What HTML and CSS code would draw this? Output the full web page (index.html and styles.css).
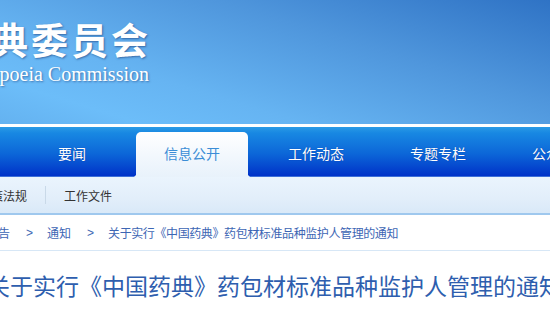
FILE: index.html
```html
<!DOCTYPE html>
<html lang="zh-CN">
<head>
<meta charset="utf-8">
<title>国家药典委员会</title>
<link rel="stylesheet" href="styles.css">
</head>
<body>
<header class="header">
  <div class="logo">
    <div class="logo-cn">国家药典委员会</div>
    <div class="logo-en">Chinese Pharmacopoeia Commission</div>
  </div>
</header>
<nav class="nav">
  <a class="nav-item first">要闻</a>
  <a class="nav-item active">信息公开</a>
  <a class="nav-item">工作动态</a>
  <a class="nav-item">专题专栏</a>
  <a class="nav-item">公众服务</a>
</nav>
<div class="subnav">
  <a class="sub-item first">政策法规</a>
  <span class="sub-sep"></span>
  <a class="sub-item">工作文件</a>
</div>
<div class="crumb">
  <a class="crumb-item first">通知公告</a>
  <span class="crumb-sep">&gt;</span>
  <a class="crumb-item">通知</a>
  <span class="crumb-sep">&gt;</span>
  <a class="crumb-item current">关于实行《中国药典》药包材标准品种监护人管理的通知</a>
</div>
<h1 class="title">关于实行《中国药典》药包材标准品种监护人管理的通知</h1>
</body>
</html>
```

FILE: styles.css
```css
html, body {
  margin: 0;
  padding: 0;
  background: #fff;
  overflow: hidden;
  font-family: "Noto Sans CJK SC", "Noto Sans", sans-serif;
}

.header {
  height: 124px;
  background: linear-gradient(197deg, #2f73c5 0%, #4f96dc 35%, #66b4f2 68%, #6cbdf9 85%, #64b2f0 100%);
  border-bottom: 3px solid #ffffff;
  overflow: hidden;
}

.logo {
  width: 320px;
  margin-left: -170px;
  padding-top: 18px;
  text-align: right;
  color: #ffffff;
}

.logo-cn {
  font-size: 37px;
  font-weight: 700;
  line-height: 42px;
  letter-spacing: 3px;
  margin-right: -1px;
  text-shadow: 1px 1px 2px rgba(20, 50, 110, 0.55);
}

.logo-en {
  font-family: "Liberation Serif", serif;
  font-size: 20px;
  line-height: 22px;
  margin-top: 3px;
  margin-right: 1px;
  text-shadow: 1px 1px 2px rgba(20, 50, 110, 0.5);
}

.nav {
  display: flex;
  height: 50px;
  background: linear-gradient(to bottom, #2b9be6 0%, #1888e2 12%, #0c66d8 55%, #0032c8 100%);
  border-bottom: 1px solid #3d6fd8;
  box-sizing: border-box;
}

.nav-item {
  flex: 0 0 122px;
  height: 49px;
  padding-top: 2px;
  box-sizing: border-box;
  line-height: 48px;
  text-align: center;
  font-size: 14px;
  color: #ffffff;
  text-shadow: 0 0 1px rgba(0, 30, 120, 0.6);
}

.nav-item.first {
  flex-basis: 133px;
  padding-left: 11px;
}

.nav-item.active {
  position: relative;
  flex: 0 0 112px;
  margin: 5px 7px 0 3px;
  height: 45px;
  padding-top: 0;
  line-height: 42px;
  background: linear-gradient(to bottom, #ffffff 0%, #f3f8fd 50%, #e8f2fb 100%);
  border-radius: 5px 5px 0 0;
  color: #3b8dd6;
  text-shadow: none;
}

.nav-item.active::before,
.nav-item.active::after {
  content: "";
  position: absolute;
  bottom: -1px;
  width: 4px;
  height: 5px;
}

.nav-item.active::before {
  left: -4px;
  background: radial-gradient(circle at 0 0, transparent 4px, #e8f2fb 4.6px);
}

.nav-item.active::after {
  right: -4px;
  background: radial-gradient(circle at 100% 0, transparent 4px, #e8f2fb 4.6px);
}

.subnav {
  display: flex;
  align-items: center;
  gap: 18px;
  height: 36px;
  background: linear-gradient(to bottom, #eaf4fd 0%, #e2eefa 60%, #d9e9f8 100%);
  border-bottom: 2px solid #9fc8ee;
}

.sub-item {
  font-size: 12px;
  line-height: 16px;
  color: #333333;
  padding-top: 1px;
}

.sub-item.first {
  margin-left: -21px;
}

.sub-sep {
  width: 1px;
  height: 18px;
  background: #c9d9e8;
}

.crumb {
  display: flex;
  align-items: center;
  height: 35px;
  border-bottom: 1px solid #d7e7f6;
  font-size: 12px;
  color: #3d66b4;
}

.crumb-item.first {
  margin-left: -38px;
}

.crumb-item.current {
  letter-spacing: -0.4px;
}

.crumb-sep {
  margin: 0 14px 0 16px;
  font-family: "Liberation Sans", sans-serif;
}

.title {
  margin: 19px 0 0 -13px;
  font-size: 23px;
  font-weight: 400;
  line-height: 30px;
  color: #2e5eae;
  white-space: nowrap;
}
```
